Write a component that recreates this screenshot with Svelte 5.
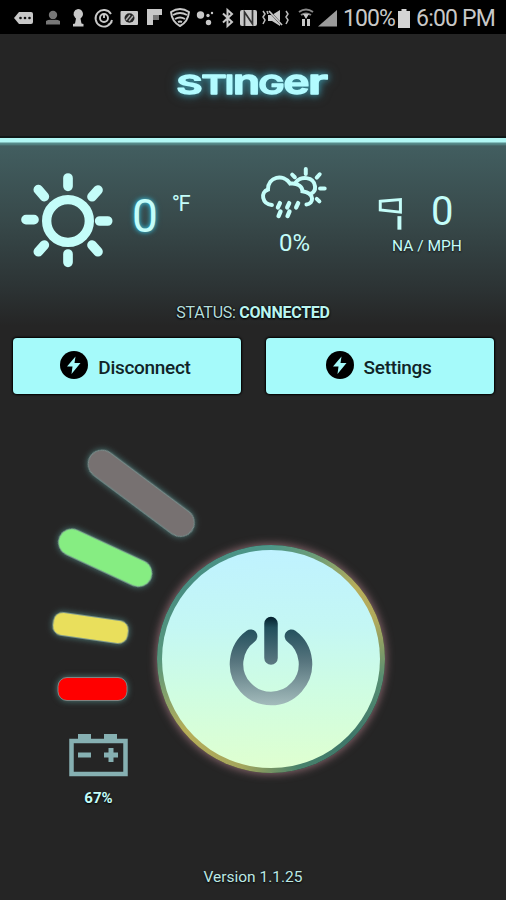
<script>
    let temperature = 0;
    let rainChance = 0;
    let windSpeed = 0;
    let windDirection = 'NA';
    let battery = 67;
    let connected = true;
    const version = '1.1.25';

    const actions = ['Disconnect', 'Settings'];

    // each letter is stretched to its own width
    const logo = [
        { letter: 'S', x: 8.5, width: 26, size: 26 },
        { letter: 'T', x: 33.5, width: 25, size: 26 },
        { letter: 'I', x: 57, width: 9, size: 26 },
        { letter: 'n', x: 65, width: 27, size: 33.5 },
        { letter: 'G', x: 90.500, width: 26, size: 26 },
        { letter: 'e', x: 115.500, width: 26, size: 33.5 },
        { letter: 'r', x: 140, width: 20, size: 33.5 }
    ];

    const levels = [
        { cx: 141.2, cy: 77.3, width: 126, height: 28, radius: 14, angle: 36.8, color: '#777171' },
        { cx: 105.2, cy: 141.8, width: 100.5, height: 27, radius: 13.5, angle: 24.9, color: '#86ed82' },
        { cx: 90.6, cy: 212, width: 75.5, height: 23, radius: 9, angle: 8.2, color: '#e9df5c' },
        { cx: 92.5, cy: 273, width: 69, height: 23, radius: 9, angle: 0, color: '#ff0000' }
    ];
</script>

<div class="app">
    <div class="status-bar">
        <svg class="tray" viewBox="0 0 340 34" fill="#c8c8c8">
            <path d="M14 18l5-6h12q2 0 2 2v8q0 2-2 2H19z" />
            <g fill="#111">
                <circle cx="20.5" cy="18" r="1.3" /><circle cx="25" cy="18" r="1.3" /><circle cx="29.5" cy="18" r="1.3" />
            </g>
            <g fill="#777">
                <circle cx="53" cy="15" r="4.2" />
                <path d="M46 21q3-2 7-1 4-1 7 1v3.5H46z" />
            </g>
            <path d="M78 9a5 5 0 0 1 3.5 8.5l-1 1 1 5 2 .5v2.500H73V24l2-.5 1-5-1-1A5 5 0 0 1 78 9z" />
            <g fill="none" stroke="#c8c8c8" stroke-width="1.9">
                <path d="M112 20a8.300 8.300 0 1 1-1-6M108 25l4-3" />
                <circle cx="104" cy="18" r="4" />
                <path d="M104 15v3" />
            </g>
            <rect x="120.500" y="11" width="17.500" height="14" rx="1" />
            <ellipse cx="129.500" cy="18" rx="5" ry="4.700" fill="#222" />
            <path d="M126 20l4-5m-1 6l4-5" stroke="#aaa" stroke-width="1.500" />
            <path d="M147 9h15v6h-9v10h-6z" />
            <path d="M153 15h6v5h-6z" fill="#777" />
            <g fill="none" stroke="#c8c8c8" stroke-width="2" stroke-linejoin="round">
                <path d="M171 12q9-6 18 0-1 10-9 14-8-4-9-14z" />
                <path d="M173 15q7-4 14 0M175 19q5-3 10 0M178 22q2-1 4 0" />
            </g>
            <circle cx="200.500" cy="15" r="3.700" />
            <circle cx="208" cy="15.500" r="1.700" /><circle cx="212" cy="13" r="1.200" /><circle cx="208.500" cy="22.500" r="2.700" />
            <path d="M223 13.500l9 8.500-4.500 4V10l4.500 4-9 8.500" fill="none" stroke="#c8c8c8" stroke-width="2" />
            <rect x="240" y="10" width="17" height="16" rx="2" />
            <path d="M244.500 26V12l8 12V10" fill="none" stroke="#333" stroke-width="1.700" />
            <path d="M268 15h4l8-5v16l-8-5h-4z" />
            <path d="M268 10l14 15" stroke="#000" stroke-width="2" />
            <path d="M269 11l13 14" stroke="#c8c8c8" stroke-width="1.800" />
            <path d="M263 11l2 3-2 3 2 3-2 4m4-13l1 3m18-3l2 3-2 3 2 3-2 4" stroke="#bbb" stroke-width="1.500" fill="none" />
            <path d="M299 12q7-5 14 0M301 15q5-3 10 0" fill="none" stroke="#888" stroke-width="2" />
            <path d="M303 14h6l-3 5zM302 19h3v7h-3zM307 19h3v7h-3z" />
            <path d="M318 26.500L337 10v16.500z" fill="#9b9b9b" />
        </svg>
        <span class="percent">100%</span>
        <svg class="phone-battery" viewBox="0 0 12 19" fill="#d4d4d4">
            <path d="M3.500 0h5v2H12v17H0V2h3.500z" />
        </svg>
        <span class="clock">6:00 PM</span>
    </div>

    <header>
        <svg class="logo" viewBox="0 0 170 44">
            {#each logo as { letter, x, width, size }}
                <text {x} y="31.5" font-size={size} textLength={width} lengthAdjust="spacingAndGlyphs">{letter}</text>
            {/each}
        </svg>
    </header>

    <section class="weather">
        <div class="conditions">
            <div class="temperature">
                <svg class="sun" viewBox="55 60 300 300" fill="none" stroke="#c4fdf9">
                    <circle cx="205" cy="213" r="64" stroke-width="28" />
                    <path d="M205 84v25M205 312v25M79 209h24M300 213h24M116 119l18 21M295 120l-18 20M116 305l18-20M295 305l-18-20" stroke-width="29" stroke-linecap="round" />
                </svg>
                <span class="degrees">{temperature}</span>
                <span class="unit">°F</span>
            </div>

            <div class="rain">
                <svg viewBox="50 40 220 170" fill="none" stroke="#c4fdf9" stroke-width="12" stroke-linecap="round">
                    <path d="M92 166C62 163 56 127 80 119C80 80 126 70 147 101C171 98 184 112 184 124C223 130 218 163 196 164" />
                    <path d="M163 99C176 77 219 79 222 110C223 122 217 129 208 132" />
                    <path d="M194 57v15M236 73l-9 10M251 116h-14M235 155l-8-8M153 74l8 8" />
                    <path d="M116 160l-6 13M144 160l-6 13M171 160l-6 13M118 185l-6 14M145 185l-6 14" stroke-width="13" />
                </svg>
                <span>{rainChance}%</span>
            </div>

            <div class="wind">
                <div class="reading">
                    <svg viewBox="410 140 80 106" fill="none" stroke="#c4fdf9" stroke-width="9">
                        <path d="M419 156l61-5v38l-61-7z" />
                        <path d="M477 201v41" stroke-width="12" />
                    </svg>
                    <span>{windSpeed}</span>
                </div>
                <p>{windDirection} / MPH</p>
            </div>
        </div>
        <p class="connection">STATUS: <strong>{connected ? 'CONNECTED' : 'DISCONNECTED'}</strong></p>
    </section>

    <div class="actions">
        {#each actions as action}
            <button class="action">
                <svg viewBox="0 0 28 28">
                    <circle cx="14" cy="14" r="14" />
                    <path d="M15.500 5.500L7 15.500h5.500l-1 7.500 9-11h-6z" fill="#a5fafa" />
                </svg>
                <span>{action}</span>
            </button>
        {/each}
    </div>

    <section class="control">
        <div class="gauge">
            <svg class="levels" viewBox="0 0 145 300">
                {#each levels as level}
                    <rect
                        x={level.cx - level.width / 2}
                        y={level.cy - level.height / 2}
                        width={level.width}
                        height={level.height}
                        rx={level.radius}
                        fill={level.color}
                        transform="rotate({level.angle} {level.cx} {level.cy})"
                    />
                {/each}
            </svg>
            <svg class="battery" viewBox="0 0 59 43" fill="#86b0b2">
                <path d="M9 0h13v6H9zM35 0h13v6H35z" />
                <rect x="2.500" y="7" width="54" height="33" fill="none" stroke="#86b0b2" stroke-width="4.500" />
                <path d="M9 18.500h13v5H9zM35 18.500h14v5H35zM39.500 14h5v14h-5z" />
            </svg>
            <span class="charge">{battery}%</span>
        </div>

        <button class="power" aria-label="Power">
            <svg viewBox="0 0 90 96" fill="none" stroke="url(#metal)" stroke-width="13.500" stroke-linecap="round">
                <defs>
                    <linearGradient id="metal" gradientUnits="userSpaceOnUse" x1="0" y1="3" x2="0" y2="92">
                        <stop offset="0" stop-color="#03202d" />
                        <stop offset="0.120" stop-color="#214f5c" />
                        <stop offset="0.500" stop-color="#57757e" />
                        <stop offset="1" stop-color="#a5bdbd" />
                    </linearGradient>
                </defs>
                <path d="M24.600 22.200A34.500 34.500 0 1 0 65.400 22.200" />
                <path d="M45 9.500L45.010 44" />
            </svg>
        </button>
    </section>

    <footer>Version {version}</footer>
</div>

<style>
    :global(body) {
        margin: 0;
        background: #252525;
    }

    .app {
        display: flex;
        flex-direction: column;
        width: 506px;
        height: 900px;
        overflow: hidden;
        background: #252525;
        color: #c4fdf9;
        font-family: Roboto, sans-serif;
    }

    p {
        margin: 0;
    }

    svg {
        display: block;
        flex: none;
    }

    .status-bar {
        display: flex;
        align-items: center;
        height: 34px;
        background: #000;
        color: #c8c8c8;
        font-size: 23px;
        line-height: 34px;
        white-space: nowrap;
    }

    .status-bar span {
        padding-top: 3px;
    }

    .tray {
        width: 340px;
        height: 34px;
    }

    .percent {
        width: 55px;
        margin-left: 3px;
        letter-spacing: -0.9px;
    }

    .phone-battery {
        width: 12px;
        height: 19px;
        margin-top: 2px;
    }

    .clock {
        margin-left: 6px;
        letter-spacing: -0.8px;
    }

    header {
        display: flex;
        justify-content: center;
        box-sizing: border-box;
        height: 102px;
        padding-top: 28px;
    }

    .logo {
        width: 170px;
        height: 44px;
        overflow: visible;
        font-family: Inter, sans-serif;
        font-weight: 600;
        fill: #b2fbff;
        stroke: #b2fbff;
        stroke-width: 1.4px;
        stroke-linejoin: round;
        filter: drop-shadow(0 0 3px #388795) drop-shadow(0 0 5px #30616d);
    }

    .weather {
        box-sizing: border-box;
        height: 194px;
        border-top: 2px solid #101818;
        background: linear-gradient(#b0f7f4 0 4px, #568a8a 5px 6px, #425e60 8px, #384a4b 80px, #2c3334 150px, #252525 188px);
    }

    .conditions {
        display: flex;
        height: 165px;
    }

    .temperature {
        display: flex;
        align-items: flex-start;
        width: 258px;
    }

    .sun {
        width: 100px;
        height: 100px;
        margin: 32px 0 0 18px;
    }

    .degrees {
        margin: 51px 0 0 14px;
        font-size: 46px;
        line-height: 54px;
        text-shadow: 0 0 4px #42c2dc, 0 0 6px #287d90;
    }

    .unit {
        margin: 53px 0 0 14px;
        font-size: 22px;
        line-height: 26px;
        letter-spacing: -1.5px;
    }

    .rain {
        display: flex;
        flex-direction: column;
        align-items: center;
        width: 73px;
        font-size: 24px;
        line-height: 28px;
    }

    .rain svg {
        width: 73px;
        height: 57px;
        margin: 25px 0 9px;
    }

    .wind {
        width: 100px;
        margin-left: 46px;
        text-align: center;
    }

    .reading {
        display: flex;
        align-items: flex-start;
        height: 98px;
        font-size: 40px;
        line-height: 46px;
    }

    .reading svg {
        width: 27px;
        height: 35px;
        margin-top: 58px;
    }

    .reading span {
        margin: 51px 0 0 27px;
    }

    .wind p {
        font-size: 15.5px;
        line-height: 20px;
        text-shadow: 0 1px 2px #111;
    }

    .connection {
        font-size: 16px;
        line-height: 20px;
        letter-spacing: -0.25px;
        text-align: center;
        color: #b5dedc;
        text-shadow: 0 0 2px #000, 0 1px 2px #000;
    }

    .connection strong {
        color: #baf5f0;
    }

    .actions {
        display: grid;
        grid-template-columns: 228px 228px;
        gap: 25px;
        padding: 8px 12px 0 13px;
    }

    .action {
        display: flex;
        align-items: center;
        justify-content: center;
        gap: 10px;
        height: 56px;
        padding: 0 3px 0 0;
        border: none;
        border-radius: 4px;
        background: #a5fafa;
        box-shadow: 0 0 2px 1px #000;
        color: #102427;
        font: 500 19px Roboto, sans-serif;
        letter-spacing: -0.3px;
    }

    .action svg {
        width: 28px;
        height: 28px;
        margin-bottom: 3px;
    }

    .action span {
        margin-top: 3px;
    }

    .control {
        display: flex;
        height: 466px;
    }

    .gauge {
        display: flex;
        flex-direction: column;
        width: 157px;
        padding-top: 22px;
    }

    .levels {
        width: 145px;
        height: 300px;
        overflow: visible;
    }

    .levels rect {
        stroke: #7e9b98;
        stroke-width: 0.8px;
        filter: drop-shadow(0 0 3px #4f7e7c);
    }

    .battery {
        width: 59px;
        height: 43px;
        margin: 18px 0 0 69px;
    }

    .charge {
        width: 59px;
        margin: 11px 0 0 69px;
        font-size: 15px;
        font-weight: 700;
        line-height: 20px;
        text-align: center;
        text-shadow: 0 1px 2px #000;
    }

    .power {
        display: flex;
        justify-content: center;
        box-sizing: border-box;
        width: 228px;
        height: 228px;
        margin-top: 151px;
        padding: 64px 0 0;
        border: 5px solid transparent;
        border-radius: 50%;
        background:
            linear-gradient(#bff2ff, #c4f7f4 35%, #cffde2 65%, #dfffd0) padding-box,
            conic-gradient(#4d9789, #6f9d76 25deg, #b7ad5b 50deg, #b0aa5c 70deg, #568d72 100deg, #3e7669 135deg, #47816b 165deg, #a4a65d 195deg, #b6ad58 230deg, #57967d 270deg, #488d81 310deg, #4d9789) border-box;
        box-shadow: 0 0 9px 1px #8c6970;
    }

    .power svg {
        width: 90px;
        height: 96px;
    }

    footer {
        padding-top: 7px;
        font-size: 15.5px;
        line-height: 20px;
        text-align: center;
        color: #bce9e5;
        text-shadow: 0 1px 2px #000;
    }
</style>
